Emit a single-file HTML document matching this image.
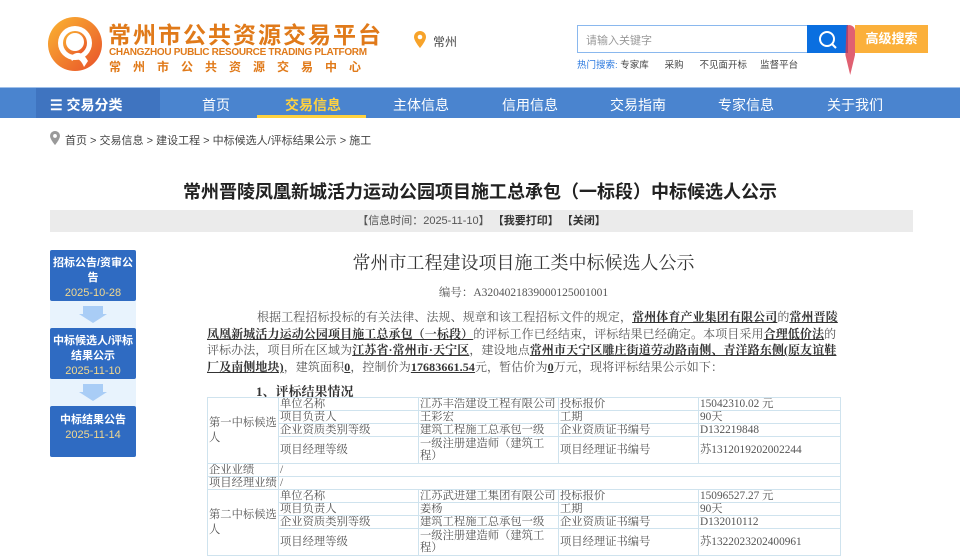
<!DOCTYPE html>
<html><head><meta charset="utf-8"><style>
*{margin:0;padding:0;box-sizing:border-box}
body{width:960px;height:556px;overflow:hidden;background:#fff;position:relative;font-family:"Liberation Sans","Noto Sans CJK SC",sans-serif;color:#333}
.a{position:absolute;white-space:nowrap}
.nav{position:absolute;top:87px;left:0;width:960px;height:31px;background:#4a84cf;border-top:1px solid #9fc0ea}
.nav span{position:absolute;top:7px;color:#fff;font-size:14px}
.side{position:absolute;left:50px;width:86px;background:#2f6bc2;color:#fff;text-align:center;font-size:11px;font-weight:bold;line-height:15px;border-radius:2px}
.side i{display:block;font-style:normal;color:#f3d98e;font-weight:normal;font-size:11px}
.serif{font-family:"Liberation Serif","Noto Serif CJK SC",serif}
.p{position:absolute;left:207px;width:634px;font-size:12px;line-height:16.7px;color:#555;letter-spacing:0.1px}
.p u{color:#333;font-weight:bold}
table{position:absolute;left:207px;top:397px;width:633px;border-collapse:collapse;font-size:11.3px;color:#555;table-layout:fixed}
td{border:1px solid #cfe3ee;height:13px;line-height:12px;padding:0 1px;vertical-align:middle;white-space:nowrap;overflow:hidden}
</style></head><body>
<svg class="a" style="left:46px;top:15px" width="58" height="58" viewBox="0 0 58 58">
<defs><linearGradient id="g" x1="0" y1="0" x2="1" y2="1"><stop offset="0" stop-color="#fbb632"/><stop offset="1" stop-color="#e8502a"/></linearGradient></defs>
<circle cx="29" cy="29" r="27" fill="url(#g)"/><circle cx="29" cy="28" r="17" fill="#fff"/><circle cx="29" cy="28" r="12" fill="url(#g)"/><circle cx="29" cy="27" r="9" fill="#fff"/>
<path d="M24 42 Q34 32 42 46 L38 52 Q33 40 26 46Z" fill="#fff"/></svg>
<div class="a" style="left:108px;top:16px;font-size:23px;font-weight:bold;color:#e07a1a;letter-spacing:2px">常州市公共资源交易平台</div>
<div class="a" style="left:109px;top:47px;font-size:10px;font-weight:bold;color:#e07a1a;letter-spacing:-0.3px">CHANGZHOU PUBLIC RESOURCE TRADING PLATFORM</div>
<div class="a" style="left:109px;top:58px;font-size:12px;font-weight:bold;color:#e07a1a;letter-spacing:12px">常州市公共资源交易中心</div>
<svg class="a" style="left:414px;top:31px" width="12" height="17" viewBox="0 0 12 17"><path d="M6 0C2.7 0 0 2.6 0 6c0 4 6 11 6 11s6-7 6-11C12 2.6 9.3 0 6 0z" fill="#f7a32a"/><circle cx="6" cy="6" r="2.3" fill="#fff"/></svg>
<div class="a" style="left:433px;top:33px;font-size:12px;color:#444">常州</div>
<div class="a" style="left:577px;top:25px;width:231px;height:28px;border:1px solid #8ab8ee"></div>
<div class="a" style="left:586px;top:32px;font-size:11px;color:#999">请输入关键字</div>
<div class="a" style="left:807px;top:25px;width:41px;height:28px;background:#0a6fe0"></div>
<svg class="a" style="left:817px;top:29px" width="22" height="22"><circle cx="10" cy="10" r="7" fill="none" stroke="#fff" stroke-width="2"/><path d="M15 15 L19 19" stroke="#fff" stroke-width="2"/></svg>
<div class="a" style="left:843px;top:25px;width:12px;height:50px;background:#d8384e;border-radius:6px;opacity:.8;clip-path:polygon(30% 0,100% 0,100% 60%,60% 100%,20% 60%)"></div>
<div class="a" style="left:855px;top:25px;width:73px;height:28px;background:#fbb03b;color:#fff;font-size:13px;font-weight:bold;text-align:center;line-height:28px">高级搜索</div>
<div class="a" style="left:577px;top:57px;font-size:9.5px;color:#444"><span style="color:#2e7be0">热门搜索:</span> 专家库 &nbsp; &nbsp; &nbsp;采购 &nbsp; &nbsp; &nbsp;不见面开标 &nbsp; &nbsp; 监督平台</div>
<div class="nav">
<div class="a" style="left:36px;top:0;width:124px;height:30px;background:#3f74c0"></div>
<span style="left:50px;font-weight:bold">☰ 交易分类</span>
<span style="left:202px">首页</span>
<span style="left:285px;color:#ffd23f;font-weight:bold">交易信息</span>
<div class="a" style="left:257px;top:27px;width:109px;height:3px;background:#ffd23f"></div>
<span style="left:393px">主体信息</span><span style="left:502px">信用信息</span><span style="left:610px">交易指南</span><span style="left:718px">专家信息</span><span style="left:827px">关于我们</span>
</div>
<svg class="a" style="left:50px;top:131px" width="10" height="14" viewBox="0 0 12 17"><path d="M6 0C2.7 0 0 2.6 0 6c0 4 6 11 6 11s6-7 6-11C12 2.6 9.3 0 6 0z" fill="#999"/><circle cx="6" cy="6" r="2.3" fill="#fff"/></svg>
<div class="a" style="left:65px;top:132px;font-size:11px;color:#444">首页 &gt; 交易信息 &gt; 建设工程 &gt; 中标候选人/评标结果公示 &gt; 施工</div>
<div class="a" style="left:0;width:960px;text-align:center;top:178px;font-size:18px;font-weight:bold;color:#222">常州晋陵凤凰新城活力运动公园项目施工总承包（一标段）中标候选人公示</div>
<div class="a" style="left:50px;top:210px;width:863px;height:22px;background:#ebebeb;text-align:center;font-size:11px;line-height:22px;color:#555">【信息时间：2025-11-10】 <b style="color:#333">【我要打印】 【关闭】</b></div>
<div class="a" style="left:50px;top:250px;width:86px;height:207px;background:#e8f3fd"></div>
<div class="side" style="top:250px;height:51px;padding-top:6px">招标公告/资审公告<i>2025-10-28</i></div>
<div class="a" style="left:83px;top:306px;width:20px;height:8px;background:#a9cdf6"></div><div class="a" style="left:79px;top:314px;border-left:14px solid transparent;border-right:14px solid transparent;border-top:9px solid #a9cdf6"></div>
<div class="side" style="top:328px;height:51px;padding-top:6px">中标候选人/评标结果公示<i>2025-11-10</i></div>
<div class="a" style="left:83px;top:384px;width:20px;height:8px;background:#a9cdf6"></div><div class="a" style="left:79px;top:392px;border-left:14px solid transparent;border-right:14px solid transparent;border-top:9px solid #a9cdf6"></div>
<div class="side" style="top:406px;height:51px;padding-top:7px">中标结果公告<i>2025-11-14</i></div>
<div class="a serif" style="left:207px;width:633px;text-align:center;top:249px;font-size:18px;color:#333">常州市工程建设项目施工类中标候选人公示</div>
<div class="a serif" style="left:207px;width:633px;text-align:center;top:284px;font-size:11.5px;color:#555">编号：A3204021839000125001001</div>
<div class="p serif" style="top:309px;text-indent:50px;white-space:normal">根据工程招标投标的有关法律、法规、规章和该工程招标文件的规定，<u>常州体育产业集团有限公司</u>的<u>常州晋陵凤凰新城活力运动公园项目施工总承包（一标段）</u>的评标工作已经结束，评标结果已经确定。本项目采用<u>合理低价法</u>的评标办法，项目所在区域为<u>江苏省·常州市·天宁区</u>，建设地点<u>常州市天宁区雕庄街道劳动路南侧、青洋路东侧(原友谊鞋厂及南侧地块)</u>，建筑面积<u>0</u>，控制价为<u>17683661.54</u>元，暂估价为<u>0</u>万元，现将评标结果公示如下：</div>
<div class="a serif" style="left:256px;top:381px;font-size:13px;font-weight:bold;color:#333">1、评标结果情况</div>
<table class="serif"><colgroup><col style="width:71px"><col style="width:140px"><col style="width:140px"><col style="width:140px"><col style="width:142px"></colgroup>
<tr><td rowspan="4" style="white-space:normal;line-height:15px">第一中标候选人</td><td>单位名称</td><td>江苏丰浩建设工程有限公司</td><td>投标报价</td><td>15042310.02 元</td></tr>
<tr><td>项目负责人</td><td>王彩宏</td><td>工期</td><td>90天</td></tr>
<tr><td>企业资质类别等级</td><td>建筑工程施工总承包一级</td><td>企业资质证书编号</td><td>D132219848</td></tr>
<tr><td style="height:27px">项目经理等级</td><td style="white-space:normal">一级注册建造师（建筑工程）</td><td>项目经理证书编号</td><td>苏1312019202002244</td></tr>
<tr><td>企业业绩</td><td colspan="4">/</td></tr>
<tr><td>项目经理业绩</td><td colspan="4">/</td></tr>
<tr><td rowspan="4" style="white-space:normal;line-height:15px">第二中标候选人</td><td>单位名称</td><td>江苏武进建工集团有限公司</td><td>投标报价</td><td>15096527.27 元</td></tr>
<tr><td>项目负责人</td><td>姜杨</td><td>工期</td><td>90天</td></tr>
<tr><td>企业资质类别等级</td><td>建筑工程施工总承包一级</td><td>企业资质证书编号</td><td>D132010112</td></tr>
<tr><td style="height:27px">项目经理等级</td><td style="white-space:normal">一级注册建造师（建筑工程）</td><td>项目经理证书编号</td><td>苏1322023202400961</td></tr>
</table>
</body></html>
